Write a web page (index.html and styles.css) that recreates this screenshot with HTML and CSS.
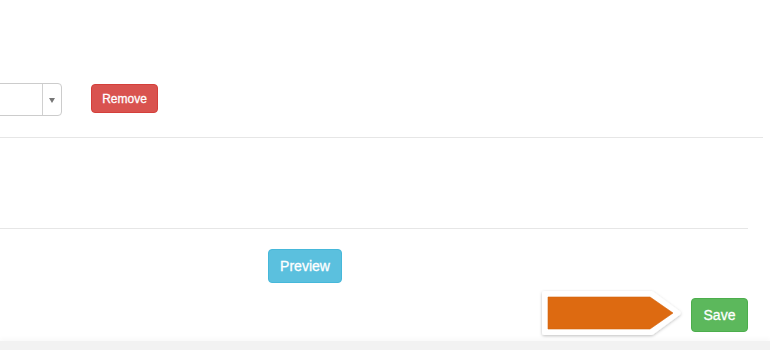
FILE: index.html
```html
<!DOCTYPE html>
<html>
<head>
<meta charset="utf-8">
<link rel="stylesheet" href="styles.css">
</head>
<body>
<div class="page">
  <div class="field-row">
    <div class="select">
      <div class="select-value"></div>
      <div class="select-toggle"><span class="caret"></span></div>
    </div>
    <button class="btn btn-danger btn-sm">Remove</button>
  </div>
  <div class="sep sep-wide"></div>
  <div class="empty-block"></div>
  <div class="sep sep-narrow"></div>
  <div class="preview-row">
    <button class="btn btn-info">Preview</button>
  </div>
  <div class="save-row">
    <button class="btn btn-success">Save</button>
  </div>
  <div class="footer-strip"></div>
  <svg class="callout" width="150" height="56" viewBox="0 0 150 56">
    <defs>
      <filter id="sh" x="-20%" y="-30%" width="140%" height="160%">
        <feDropShadow dx="0" dy="1" stdDeviation="1.8" flood-color="#000" flood-opacity="0.25"/>
      </filter>
    </defs>
    <polygon points="8.5,8.5 115.5,8.5 142,28 115.5,47.5 8.5,47.5" fill="#fff" stroke="#fff" stroke-width="5" stroke-linejoin="round" filter="url(#sh)"/>
    <polygon points="12,12 114,12 137,28 114,44 12,44" fill="#dd6a11" stroke="#d5640e" stroke-width="0.6" stroke-linejoin="round"/>
  </svg>
</div>
</body>
</html>
```

FILE: styles.css
```css
html, body {
  margin: 0;
  padding: 0;
  background: #fff;
  overflow: hidden;
}
body {
  font-family: "Liberation Sans", Arial, Helvetica, sans-serif;
  width: 770px;
  height: 350px;
}
.page {
  position: relative;
  width: 770px;
  height: 350px;
  display: flex;
  flex-direction: column;
}
.field-row {
  display: flex;
  align-items: flex-start;
  padding-top: 83px;
  height: 137px;
  box-sizing: border-box;
  flex-shrink: 0;
}
.select {
  display: flex;
  width: 200px;
  height: 33px;
  margin-left: -138px;
  border: 1px solid #cccccc;
  border-radius: 4px;
  box-sizing: border-box;
  background: #fff;
}
.select-value {
  flex: 1;
}
.select-toggle {
  width: 18px;
  border-left: 1px solid #d0d0d0;
  display: flex;
  align-items: center;
  justify-content: center;
}
.caret {
  width: 0;
  height: 0;
  border-left: 3px solid transparent;
  border-right: 3px solid transparent;
  border-top: 5px solid #777;
  margin-top: 1px;
}
.btn {
  font-family: "Liberation Sans", Arial, Helvetica, sans-serif;
  color: #fff;
  border: 1px solid transparent;
  border-radius: 4px;
  cursor: pointer;
  box-sizing: border-box;
  line-height: 20px;
  font-size: 14px;
  padding: 6px 0;
  height: 34px;
  text-align: center;
  flex-shrink: 0;
  -webkit-text-stroke: 0.3px #fff;
}
.btn-sm {
  font-size: 12px;
  padding: 3px 0;
  height: 29px;
  line-height: 20px;
}
.btn-danger {
  background: #d9534f;
  border-color: #d43f3a;
  margin-left: 29px;
  margin-top: 1px;
  width: 67px;
}
.btn-info {
  background: #5bc0de;
  border-color: #46b8da;
  width: 74px;
}
.btn-success {
  background: #5cb85c;
  border-color: #4cae4c;
  width: 57px;
}
.sep {
  height: 1px;
  background: #e6e6e6;
  flex-shrink: 0;
}
.sep-wide {
  width: 763px;
}
.sep-narrow {
  width: 748px;
}
.empty-block {
  height: 90px;
  flex-shrink: 0;
}
.preview-row {
  display: flex;
  padding-top: 20px;
  padding-left: 268px;
}
.save-row {
  display: flex;
  justify-content: flex-end;
  padding-right: 22px;
  margin-top: 15px;
}
.footer-strip {
  margin-top: 9px;
  height: 12px;
  background: #f2f2f2;
  box-shadow: 0 -3px 4px #fafafa;
  flex-shrink: 0;
}
.callout {
  position: absolute;
  left: 536px;
  top: 285px;
}
```
